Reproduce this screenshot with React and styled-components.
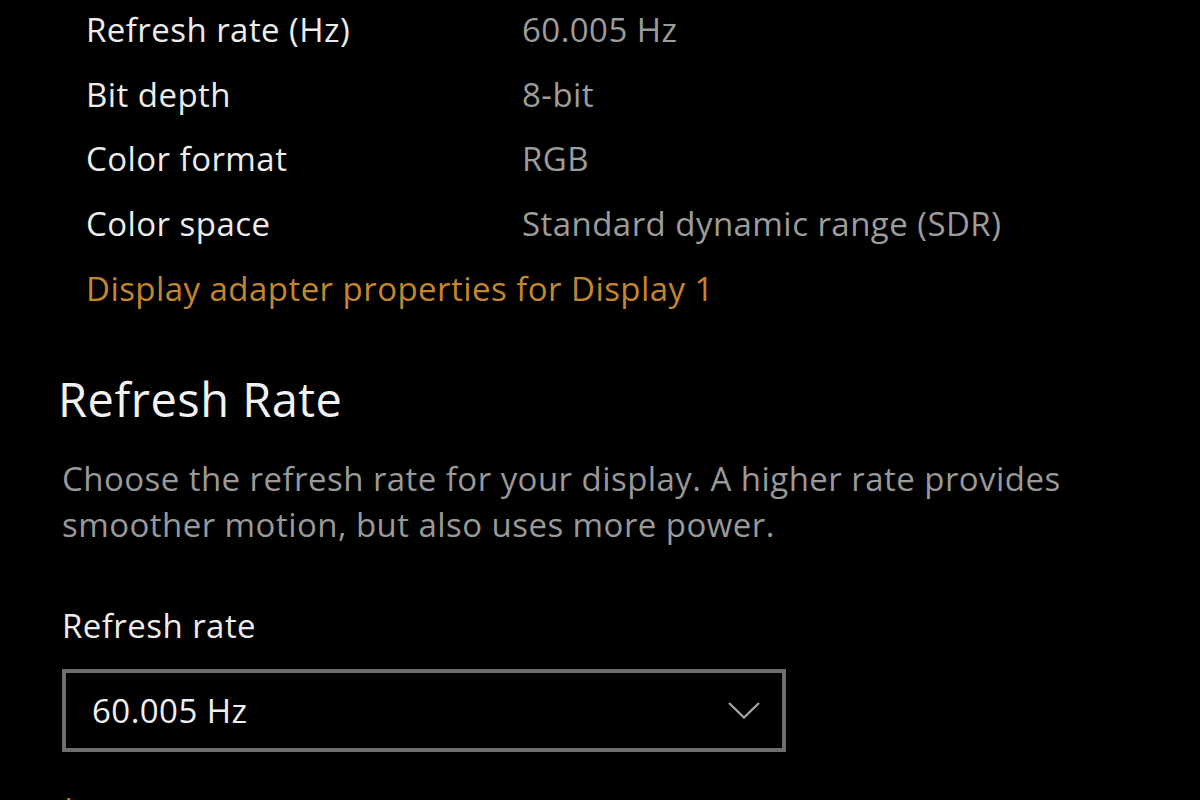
import React from "react";
import styled, { createGlobalStyle } from "styled-components";

const Global = createGlobalStyle`
  html, body {
    margin: 0;
    padding: 0;
    background: #000;
    overflow: hidden;
  }
  body {
    font-family: "Open Sans", "Noto Sans", sans-serif;
    -webkit-font-smoothing: antialiased;
  }
`;

const Page = styled.div`
  width: 1200px;
  height: 800px;
  background: #000;
  overflow: hidden;
  padding-left: 60px;
  box-sizing: border-box;
  display: flex;
  flex-direction: column;
  font-size: 33px;
  letter-spacing: 0.45px;
  & > * {
    flex-shrink: 0;
  }
`;

const Details = styled.div`
  display: flex;
  flex-direction: column;
  padding-left: 26px;
  margin-top: -3px;
`;

const Row = styled.div`
  display: grid;
  grid-template-columns: 436px 1fr;
  align-items: center;
  height: 64.75px;
`;

const Label = styled.span`
  color: #ececec;
`;

const Value = styled.span`
  color: #9c9c9c;
`;

const Link = styled.a`
  display: flex;
  align-items: center;
  height: ${(p) => p.$h || "64.75px"};
  color: #c4862d;
  text-decoration: none;
  margin-top: ${(p) => p.$mt || "0"};
  margin-left: ${(p) => p.$ml || "0"};
`;

const Heading = styled.h2`
  margin: 50px 0 0 -2px;
  font-size: 47px;
  line-height: 56px;
  letter-spacing: 0.5px;
  font-weight: 400;
  color: #f2f2f2;
`;

const Description = styled.p`
  margin: 29px 0 0 2px;
  line-height: 46px;
  color: #999999;
  width: 1060px;
`;

const FieldLabel = styled.div`
  margin: 55px 0 0 2px;
  line-height: 46px;
  color: #ececec;
`;

const Select = styled.div`
  margin: 20px 0 0 2px;
  width: 724px;
  height: 83px;
  box-sizing: border-box;
  border: 4px solid #6e6e6e;
  display: flex;
  align-items: center;
  justify-content: space-between;
  padding: 0 22px 0 26px;
  color: #f0f0f0;
`;

const Chevron = () => (
  <svg width="32" height="17" viewBox="0 0 32 17" fill="none">
    <path d="M1 1 L16 15.5 L31 1" stroke="#a8a8a8" strokeWidth="2.2" />
  </svg>
);

const rows = [
  ["Refresh rate (Hz)", "60.005 Hz"],
  ["Bit depth", "8-bit"],
  ["Color format", "RGB"],
  ["Color space", "Standard dynamic range (SDR)"],
];

export default function App() {
  return (
    <>
      <Global />
      <Page>
        <Details>
          {rows.map(([l, v]) => (
            <Row key={l}>
              <Label>{l}</Label>
              <Value>{v}</Value>
            </Row>
          ))}
          <Link href="#">Display adapter properties for Display 1</Link>
        </Details>
        <Heading>Refresh Rate</Heading>
        <Description>
          Choose the refresh rate for your display. A higher rate provides
          smoother motion, but also uses more power.
        </Description>
        <FieldLabel>Refresh rate</FieldLabel>
        <Select>
          <span>60.005 Hz</span>
          <Chevron />
        </Select>
        <Link href="#" $mt="38px" $ml="4px" $h="40px">
          Learn more
        </Link>
      </Page>
    </>
  );
}
